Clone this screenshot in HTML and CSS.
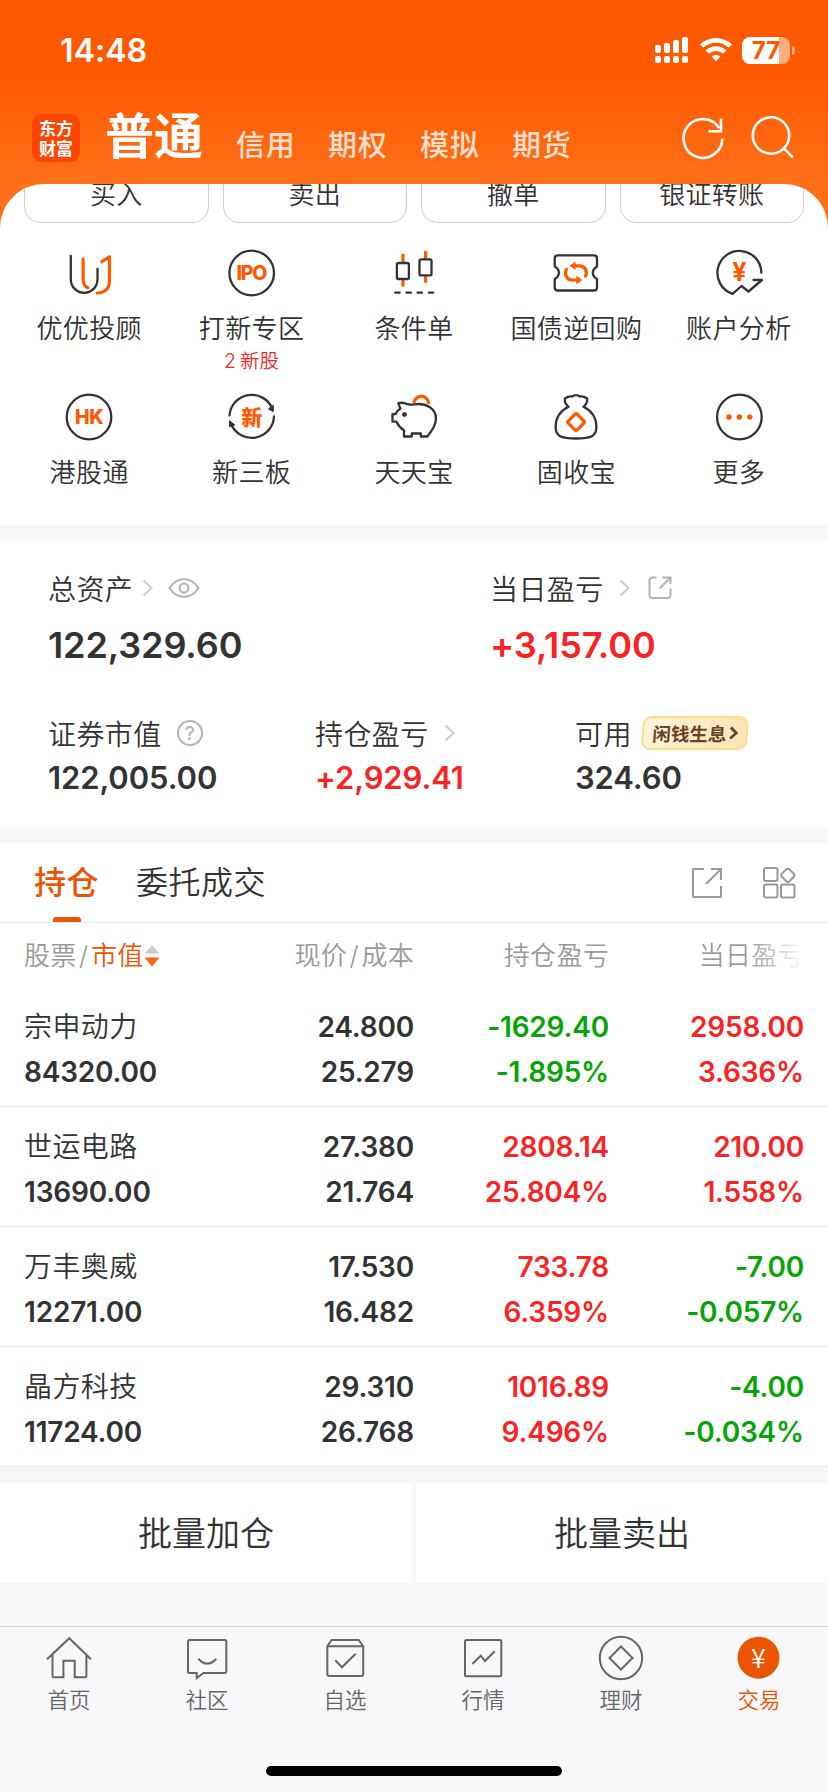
FILE: index.html
```html
<!DOCTYPE html>
<html lang="zh-CN">
<head>
    <meta charset="UTF-8">
    <meta name="viewport" content="width=device-width, initial-scale=1.0">
    <title>交易</title>
    <link rel="stylesheet" href="styles.css">
</head>
<body>
    <div class="top">
        <div class="status-bar">
            <span class="time">14:48</span>
            <div class="status-icons">
                <svg width="34" height="28" viewBox="0 0 34 28" fill="#fff">
                    <rect x="0" y="9" width="6" height="8" rx="2"/>
                    <rect x="9" y="7" width="6" height="10" rx="2"/>
                    <rect x="18" y="4" width="6" height="13" rx="2"/>
                    <rect x="27" y="1" width="6" height="16" rx="2"/>
                    <rect x="0" y="20" width="6" height="7" rx="2"/>
                    <rect x="9" y="20" width="6" height="7" rx="2"/>
                    <rect x="18" y="20" width="6" height="7" rx="2"/>
                    <rect x="27" y="20" width="6" height="7" rx="2"/>
                </svg>
                <svg class="wifi" width="32" height="28" viewBox="0 0 32 28" fill="none" stroke="#fff" stroke-width="4.6">
                    <path d="M1.6 10.2a20.6 20.6 0 0 1 28.8 0"/>
                    <path d="M7.2 16.2a12.6 12.6 0 0 1 17.6 0"/>
                    <path d="M16 25.2l-4.4-4.6a6.4 6.4 0 0 1 8.8 0z" fill="#fff" stroke="none"/>
                </svg>
                <div class="battery"><span>77</span></div>
                <div class="battery-tip"></div>
            </div>
        </div>
        <div class="nav">
            <div class="logo">东方<br>财富</div>
            <div class="nav-active">普通</div>
            <div class="nav-item">信用</div>
            <div class="nav-item">期权</div>
            <div class="nav-item">模拟</div>
            <div class="nav-item">期货</div>
            <div class="nav-actions">
                <svg width="48" height="48" viewBox="0 0 48 48" fill="none" stroke="#fff" stroke-width="2.6">
                    <path d="M43.3 24.5a19.4 19.4 0 1 1-3-10.4"/>
                    <path d="M42 4.500v12.800H29.500"/>
                </svg>
                <svg width="48" height="48" viewBox="0 0 48 48" fill="none" stroke="#fff" stroke-width="2.6">
                    <circle cx="22" cy="21.5" r="18.2"/>
                    <path d="M34.8 34.3l9 9"/>
                </svg>
            </div>
        </div>
        <div class="panel">
            <div class="quick">
                <div>买入</div>
                <div>卖出</div>
                <div>撤单</div>
                <div>银证转账</div>
            </div>
            <div class="services">
                <div class="service">
                    <svg class="icon" viewBox="0 0 56 56">
                        <path d="M9.8 10.8V34.5a13.3 13.3 0 0 0 26.7 0V23.8"/>
                        <path class="accent" d="M22.1 14.2V34q0 6.500 4.700 8.800M40.800 16.700l7.700-4.800V35.500q0 12-12.400 12.500"/>
                    </svg>
                    <div class="label">优优投顾</div>
                </div>
                <div class="service">
                    <svg class="icon" viewBox="0 0 56 56">
                        <circle cx="27.700" cy="28" r="22.300"/>
                        <text x="27.900" y="35" textLength="31">IPO</text>
                    </svg>
                    <div class="label">打新专区</div>
                    <div class="note">2 新股</div>
                </div>
                <div class="service">
                    <svg class="icon" viewBox="0 0 56 56">
                        <path class="accent" d="M17 10.200v5.600M17 36v4.200M39.600 7v5.600M39.600 32v4.400"/>
                        <rect x="10.900" y="18" width="12" height="16" rx="1.500"/>
                        <rect x="33.500" y="14.400" width="12" height="16" rx="1.500"/>
                        <path d="M9.200 47.700h4.400M20.500 47.700h4.400M31.500 47.700h4.400M42.800 47.700h4.400"/>
                    </svg>
                    <div class="label">条件单</div>
                </div>
                <div class="service">
                    <svg class="icon" viewBox="0 0 56 56">
                        <path d="M9.700 10.400H46q3 0 3 3V21.500q-4.200 2.500-4.200 6.200T49 34V42.500q0 3-3 3H9.700q-3 0-3-3V34q4.200-2.500 4.200-6.300T6.700 21.500V13.400q0-3 3-3z"/>
                        <path class="accent" d="M26 20.800h5.500c5.500 0 8.300 5.400 6 10.400M29.500 35h-5c-6 0-8.500-5.500-6-10.500"/>
                        <path class="solid" d="M21.500 20.800l6-4.200v8.400zM34.300 35l-6-4.200v8.400z"/>
                    </svg>
                    <div class="label">国债逆回购</div>
                </div>
                <div class="service">
                    <svg class="icon" viewBox="0 0 56 56">
                        <path d="M50.400 27.800A22 22 0 1 0 21.500 48.800L30.500 41l7 5.500L51 35H42.500"/>
                        <text class="yen" x="28.500" y="36">¥</text>
                    </svg>
                    <div class="label">账户分析</div>
                </div>
                <div class="service">
                    <svg class="icon" viewBox="0 0 56 56">
                        <circle cx="28" cy="28" r="22.300"/>
                        <text x="28.300" y="35" textLength="28.500">HK</text>
                    </svg>
                    <div class="label">港股通</div>
                </div>
                <div class="service">
                    <svg class="icon" viewBox="0 0 56 56">
                        <path d="M5.500 26.500A22.300 22.300 0 0 1 48.300 19.500M50 27.500A22.300 22.300 0 0 1 7 34.800"/>
                        <path class="dark" d="M49 22.500l-4.500-2.500 4.500-3.500zM5.800 32l5 4-5 1.500z"/>
                        <text class="xin" x="27.700" y="35.500">新</text>
                    </svg>
                    <div class="label">新三板</div>
                </div>
                <div class="service">
                    <svg class="icon" viewBox="0 0 56 56">
                        <path class="accent thick" d="M28.200 12.700q2.500-5.500 7.500-5.500 5 .5 7 6.500"/>
                        <path d="M12.300 14.200q5-1.200 9.200 1 3 .9 6.500.2C40 13.500 50 19.500 50 29.500c0 6-3 10.500-8.700 18h-6.500v-3h-9v3H18v-6.200q-5-3-7.500-8.600H6.500v-7.500H9.500q1.500-3.600 5-5.600z"/>
                        <circle class="dark dot" cx="18.500" cy="25.500" r="2"/>
                    </svg>
                    <div class="label">天天宝</div>
                </div>
                <div class="service">
                    <svg class="icon" viewBox="0 0 56 56">
                        <path d="M20.500 17.700C12 22 7.600 29.500 7.600 37.700 7.600 46.500 12 49.500 28 49.500s20.400-3 20.400-11.800C48.400 29.500 44 22 35.500 17.700q4.400-3.400 3.600-8.200-3-2.400-7.100-2-4-2.800-8 0-4.100-.4-7.100 2-.8 4.800 3.600 8.200z"/>
                        <rect class="accent" x="21.800" y="26.800" width="12.600" height="12.600" rx="1.500" transform="rotate(45 28.100 33.100)"/>
                    </svg>
                    <div class="label">固收宝</div>
                </div>
                <div class="service">
                    <svg class="icon" viewBox="0 0 56 56">
                        <circle cx="28.400" cy="28" r="22.300"/>
                        <path class="solid" d="M15.300 28a2.700 2.700 0 1 0 5.400 0a2.700 2.700 0 1 0-5.400 0M25.700 28a2.700 2.700 0 1 0 5.400 0a2.700 2.700 0 1 0-5.400 0M36.100 28a2.700 2.700 0 1 0 5.400 0a2.700 2.700 0 1 0-5.400 0"/>
                    </svg>
                    <div class="label">更多</div>
                </div>
            </div>
        </div>
    </div>

    <div class="assets">
        <div class="assets-main">
            <div>
                <div class="asset-label">总资产
                    <svg class="arrow near" viewBox="0 0 12 18"><path d="M1.500 1.500L9.500 9l-8 7.500"/></svg>
                    <svg class="eye" viewBox="0 0 32 24">
                        <path d="M1.500 12C9 .2 23 .2 30.500 12 23 23.800 9 23.800 1.500 12z"/>
                        <circle cx="16" cy="12" r="4.500"/>
                    </svg>
                </div>
                <div class="asset-value big">122,329.60</div>
            </div>
            <div>
                <div class="asset-label">当日盈亏
                    <svg class="arrow" viewBox="0 0 12 18"><path d="M1.500 1.500L9.500 9l-8 7.500"/></svg>
                    <svg class="share" viewBox="0 0 24 24">
                        <path d="M8.500 1.500H4.500q-3 0-3 3V19q0 3 3 3H19.500q3 0 3-3V12.500M14.500 1.500h8v6.500M22 2L11.500 12.500"/>
                    </svg>
                </div>
                <div class="asset-value big red">+3,157.00</div>
            </div>
        </div>
        <div class="assets-sub">
            <div>
                <div class="asset-label">证券市值
                    <svg class="help" viewBox="0 0 28 28">
                        <circle cx="14" cy="14" r="12"/>
                        <text x="14" y="20.500">?</text>
                    </svg>
                </div>
                <div class="asset-value">122,005.00</div>
            </div>
            <div>
                <div class="asset-label">持仓盈亏
                    <svg class="arrow" viewBox="0 0 12 18"><path d="M1.500 1.500L9.500 9l-8 7.500"/></svg>
                </div>
                <div class="asset-value red">+2,929.41</div>
            </div>
            <div>
                <div class="asset-label">可用
                    <div class="badge"><span>闲钱生息</span>
                        <svg width="9" height="14" viewBox="0 0 9 14"><path d="M1.500 1.500L7.300 7l-5.800 5.500"/></svg>
                    </div>
                </div>
                <div class="asset-value">324.60</div>
            </div>
        </div>
    </div>

    <div class="tabs">
        <div class="tab active">持仓</div>
        <div class="tab">委托成交</div>
        <div class="tab-actions">
            <svg width="32" height="32" viewBox="0 0 32 32">
                <path d="M13 2H3q-1 0-1 1V29q0 1 1 1H29q1 0 1-1V19M20 2H30V13M30 2L15 17"/>
            </svg>
            <svg width="34" height="34" viewBox="0 0 34 34">
                <rect x="2" y="2" width="13.500" height="13" rx="2"/>
                <rect x="2" y="18.500" width="13.500" height="13" rx="2"/>
                <rect x="19" y="18.500" width="13.500" height="13" rx="2"/>
                <rect x="20.500" y="4" width="10.600" height="10.600" rx="2.500" transform="rotate(45 25.800 9.300)"/>
            </svg>
        </div>
    </div>

    <div class="table">
        <div class="row head">
            <div>股票<i>/</i><span class="sorted">市值</span><svg width="16" height="22" viewBox="0 0 16 22"><path fill="#ccc" d="M8 .5L15.500 8.500H.5z"/><path fill="#fa6414" d="M8 21.500L.5 12.500h15z"/></svg></div>
            <div>现价<i>/</i>成本</div>
            <div>持仓盈亏</div>
            <div class="fade">当日盈亏</div>
        </div>
        <div class="row">
            <div><b class="name">宗申动力</b><b>84320.00</b></div>
            <div><b>24.800</b><b>25.279</b></div>
            <div class="green"><b>-1629.40</b><b>-1.895%</b></div>
            <div class="red"><b>2958.00</b><b>3.636%</b></div>
        </div>
        <div class="row">
            <div><b class="name">世运电路</b><b>13690.00</b></div>
            <div><b>27.380</b><b>21.764</b></div>
            <div class="red"><b>2808.14</b><b>25.804%</b></div>
            <div class="red"><b>210.00</b><b>1.558%</b></div>
        </div>
        <div class="row">
            <div><b class="name">万丰奥威</b><b>12271.00</b></div>
            <div><b>17.530</b><b>16.482</b></div>
            <div class="red"><b>733.78</b><b>6.359%</b></div>
            <div class="green"><b>-7.00</b><b>-0.057%</b></div>
        </div>
        <div class="row">
            <div><b class="name">晶方科技</b><b>11724.00</b></div>
            <div><b>29.310</b><b>26.768</b></div>
            <div class="red"><b>1016.89</b><b>9.496%</b></div>
            <div class="green"><b>-4.00</b><b>-0.034%</b></div>
        </div>
    </div>

    <div class="batch">
        <div>批量加仓</div>
        <div>批量卖出</div>
    </div>

    <div class="tabbar">
        <div class="tabbar-item">
            <svg viewBox="0 0 48 48"><path d="M2 26.300L24.300 5.200 46 26.300M7.500 22V43q0 1.200 1.200 1.200H18.400V27.700H29.700V44.200H40.200q1.200 0 1.200-1.200V22"/></svg>
            <span>首页</span>
        </div>
        <div class="tabbar-item">
            <svg viewBox="0 0 48 48"><path d="M6.500 6.900H41.800q1.500 0 1.500 1.500V38.400q0 1.500-1.500 1.500H20.500L13.700 45V39.900H6.500q-1.500 0-1.500-1.500V8.400q0-1.500 1.500-1.500zM15.300 25.700q9 9.800 18 0"/></svg>
            <span>社区</span>
        </div>
        <div class="tabbar-item">
            <svg viewBox="0 0 48 48"><path d="M6.300 13.200L10.700 7H37.700L42.200 13.200V41q0 2-2 2H8.300q-2 0-2-2zM6.300 13.200H42.200M14.300 27.300L21 34.300 34.700 20.700"/></svg>
            <span>自选</span>
        </div>
        <div class="tabbar-item">
            <svg viewBox="0 0 48 48"><rect x="6" y="6.900" width="36.300" height="36.300" rx="1.500"/><path d="M13.300 31L21.700 22.700 26 28 35.700 18.300"/></svg>
            <span>行情</span>
        </div>
        <div class="tabbar-item">
            <svg viewBox="0 0 48 48"><circle cx="24" cy="25" r="21.200"/><path d="M24 13.500L35.500 25 24 36.500 12.500 25z"/></svg>
            <span>理财</span>
        </div>
        <div class="tabbar-item current">
            <svg viewBox="0 0 48 48"><circle cx="23.500" cy="24.700" r="21"/><text x="23.500" y="35">¥</text></svg>
            <span>交易</span>
        </div>
    </div>
    <div class="home-indicator"></div>
</body>
</html>
```
FILE: styles.css
```css
* {
    box-sizing: border-box;
}

body {
    margin: 0;
    width: 828px;
    height: 1792px;
    overflow: hidden;
    display: flex;
    flex-direction: column;
    background: #f7f8fa;
    color: #333;
    font-family: Inter, "Noto Sans CJK SC", sans-serif;
    font-weight: 350;
}

svg {
    display: block;
    flex: none;
}

.red {
    color: #fa2323;
}

.green {
    color: #06a406;
}

/* header */
.top {
    height: 525px;
    background: linear-gradient(#ff5900 0, #ff5900 75px, #ff7019 184px, #ff7019 100%);
}

.status-bar {
    height: 100px;
    padding: 0 33px 0 60px;
    display: flex;
    align-items: center;
    justify-content: space-between;
    color: #fff;
}

.time {
    font-size: 32px;
    font-weight: 600;
    letter-spacing: 0.1px;
}

.status-icons {
    display: flex;
    align-items: center;
}

.wifi {
    margin: 0 10px 0 11px;
}

.battery {
    width: 48px;
    height: 27px;
    border-radius: 8px;
    background: linear-gradient(90deg, #fff 37px, #ffac80 37px);
    color: #ff5900;
    font-size: 24px;
    font-weight: 700;
    line-height: 27px;
    text-align: center;
}

.battery-tip {
    width: 3px;
    height: 9px;
    margin-left: 2px;
    border-radius: 0 4px 4px 0;
    background: #ffac80;
}

.nav {
    height: 84px;
    padding-left: 32px;
    display: flex;
    color: #fff;
}

.logo {
    width: 48px;
    height: 48px;
    margin: 14px 25px 0 0;
    padding-top: 4px;
    border-radius: 10px;
    background: #ff4500;
    font-family: "Noto Sans CJK SC", sans-serif;
    font-size: 17px;
    font-weight: 700;
    line-height: 20px;
    text-align: center;
}

.nav-active {
    width: 131px;
    font-size: 49px;
    font-weight: 600;
    line-height: 74px;
}

.nav-item {
    width: 92px;
    padding-top: 26px;
    font-size: 29px;
    font-weight: 500;
    line-height: 40px;
    letter-spacing: 0.8px;
    color: #ffe0ce;
}

.nav-actions {
    margin: 14px 0 0 75px;
    display: flex;
    gap: 22px;
}

.panel {
    height: 341px;
    border-radius: 44px 44px 0 0;
    background: #fff;
    overflow: hidden;
}

.quick {
    height: 39px;
    padding: 0 24px;
    display: flex;
    align-items: flex-end;
    gap: 14px;
    overflow: hidden;
}

.quick div {
    flex: 1;
    height: 60px;
    border: 1px solid #ccc;
    border-radius: 16px;
    font-size: 26px;
    line-height: 62px;
    letter-spacing: 0.3px;
    text-align: center;
}

.services {
    padding: 22px 8px 0;
    display: grid;
    grid-template-columns: repeat(5, 1fr);
    grid-template-rows: 144px 136px;
}

.service {
    display: flex;
    flex-direction: column;
    align-items: center;
}

.icon {
    width: 56px;
    height: 56px;
    fill: none;
    stroke: #333;
    stroke-width: 2.3;
    stroke-linejoin: round;
    stroke-linecap: round;
}

.icon .accent {
    stroke: #ff5900;
    stroke-width: 3.2;
}

.icon .solid {
    fill: #ff5900;
    stroke: none;
}

.icon .dark {
    fill: #333;
    stroke-width: 1;
}

.icon text {
    fill: #ff5900;
    stroke: none;
    font-size: 19.5px;
    font-weight: 800;
    text-anchor: middle;
}

.icon .yen {
    font-size: 25px;
    font-weight: 700;
}

.icon .xin {
    font-size: 21px;
}

.label {
    margin-top: 13px;
    font-size: 26px;
    line-height: 30px;
    letter-spacing: 0.4px;
    white-space: nowrap;
}

.note {
    margin-top: 4px;
    font-size: 19.5px;
    line-height: 26px;
    word-spacing: -1.5px;
    color: #fa2323;
}

/* assets */
.assets {
    height: 286px;
    margin-top: 16px;
    padding: 27px 48px 0;
    background: #fff;
}

.assets-main {
    display: grid;
    grid-template-columns: 442px 1fr;
}

.assets-sub {
    margin-top: 40px;
    display: grid;
    grid-template-columns: 267px 260px 1fr;
}

.asset-label {
    height: 40px;
    display: flex;
    align-items: center;
    font-size: 28px;
    letter-spacing: 0.4px;
    white-space: nowrap;
}

.asset-label svg {
    fill: none;
    stroke: #b4b4b4;
    stroke-width: 2;
}

.asset-label .arrow {
    width: 12px;
    height: 18px;
    margin-left: 15px;
    stroke: #ccc;
}

.asset-label .near {
    margin-left: 9px;
}

.eye {
    width: 32px;
    height: 24px;
    margin-left: 14px;
}

.share {
    width: 24px;
    height: 24px;
    margin-left: 17px;
}

.help {
    width: 28px;
    height: 28px;
    margin-left: 14px;
}

.help text {
    fill: #b4b4b4;
    stroke: none;
    font-size: 19px;
    font-weight: 500;
    text-anchor: middle;
}

.asset-value {
    font-size: 31px;
    font-weight: 600;
    line-height: 50px;
    letter-spacing: -0.1px;
}

.asset-value.big {
    margin-top: 9px;
    font-size: 36px;
    line-height: 56px;
}

.badge {
    width: 106px;
    height: 34px;
    margin-left: 10px;
    border: 2px solid #ffdf80;
    border-radius: 9px;
    background: linear-gradient(100deg, #fff5da, #ffe2b4);
    display: flex;
    align-items: center;
    justify-content: center;
    gap: 2px;
    color: #68432a;
    font-size: 18.5px;
    font-weight: 700;
    letter-spacing: 0;
    transform: skewX(-4deg);
}

.badge svg {
    stroke: #68432a;
    stroke-width: 2.8;
}

/* positions */
.tabs {
    height: 80px;
    margin-top: 16px;
    padding: 0 32px 0 34px;
    border-bottom: 1px solid #ebebeb;
    background: #fff;
    display: flex;
    font-size: 32px;
    letter-spacing: 0.5px;
    line-height: 80px;
}

.tab {
    margin-right: 37px;
}

.tab.active {
    color: #ea5504;
    font-weight: 500;
    display: flex;
    flex-direction: column;
    align-items: center;
}

.tab.active::after {
    content: "";
    width: 28px;
    height: 5px;
    margin-top: -6px;
    border-radius: 3px 3px 0 0;
    background: #ea5504;
}

.tab-actions {
    margin-left: auto;
    display: flex;
    align-items: center;
    gap: 39px;
}

.tab-actions svg {
    fill: none;
    stroke: #999;
    stroke-width: 2;
}

.table {
    background: #fff;
}

.row {
    height: 120px;
    padding: 18px 24px 0;
    border-bottom: 1px solid #ebebeb;
    display: grid;
    grid-template-columns: 200px 190px 195px 195px;
    text-align: right;
}

.row div:first-child {
    text-align: left;
}

.row b {
    display: block;
    font-size: 28px;
    font-weight: 600;
    line-height: 45px;
    letter-spacing: -0.2px;
}

.row .name {
    font-weight: 350;
    letter-spacing: 0.4px;
}

.row.head {
    height: 64px;
    padding-top: 13px;
    border: none;
    color: #999;
    font-size: 26px;
    line-height: 40px;
    letter-spacing: 0.3px;
}

.head div:first-child {
    display: flex;
    align-items: center;
    height: 40px;
}

.head i {
    margin: 0 2.5px;
    font-style: normal;
}

.sorted {
    color: #ea5504;
}

.head svg {
    margin-left: 0;
}

.fade {
    background: linear-gradient(90deg, #999 72%, #fff 100%);
    -webkit-background-clip: text;
    background-clip: text;
    color: transparent;
}

.batch {
    height: 100px;
    margin-top: 16px;
    display: flex;
    gap: 4px;
}

.batch div {
    flex: 1;
    background: #fff;
    font-size: 34px;
    line-height: 101px;
    text-align: center;
}

/* bottom bar */
.tabbar {
    height: 140px;
    margin-top: 43px;
    border-top: 1px solid #d5d6d9;
    background: #f8f8fb;
    display: flex;
}

.tabbar-item {
    flex: 1;
    padding-top: 6px;
    display: flex;
    flex-direction: column;
    align-items: center;
    color: #666;
    font-size: 21.5px;
    line-height: 30px;
}

.tabbar-item svg {
    width: 48px;
    height: 48px;
    margin-bottom: 4px;
    fill: none;
    stroke: #666;
    stroke-width: 2;
}

.tabbar-item.current {
    color: #ea5504;
}

.current circle {
    fill: #ea5504;
    stroke: none;
}

.current text {
    fill: #fff;
    stroke: none;
    font-family: "Noto Sans CJK SC", sans-serif;
    font-size: 27px;
    font-weight: 350;
    text-anchor: middle;
}

.home-indicator {
    width: 296px;
    height: 10px;
    margin: 0 auto;
    border-radius: 5px;
    background: #000;
}
```
